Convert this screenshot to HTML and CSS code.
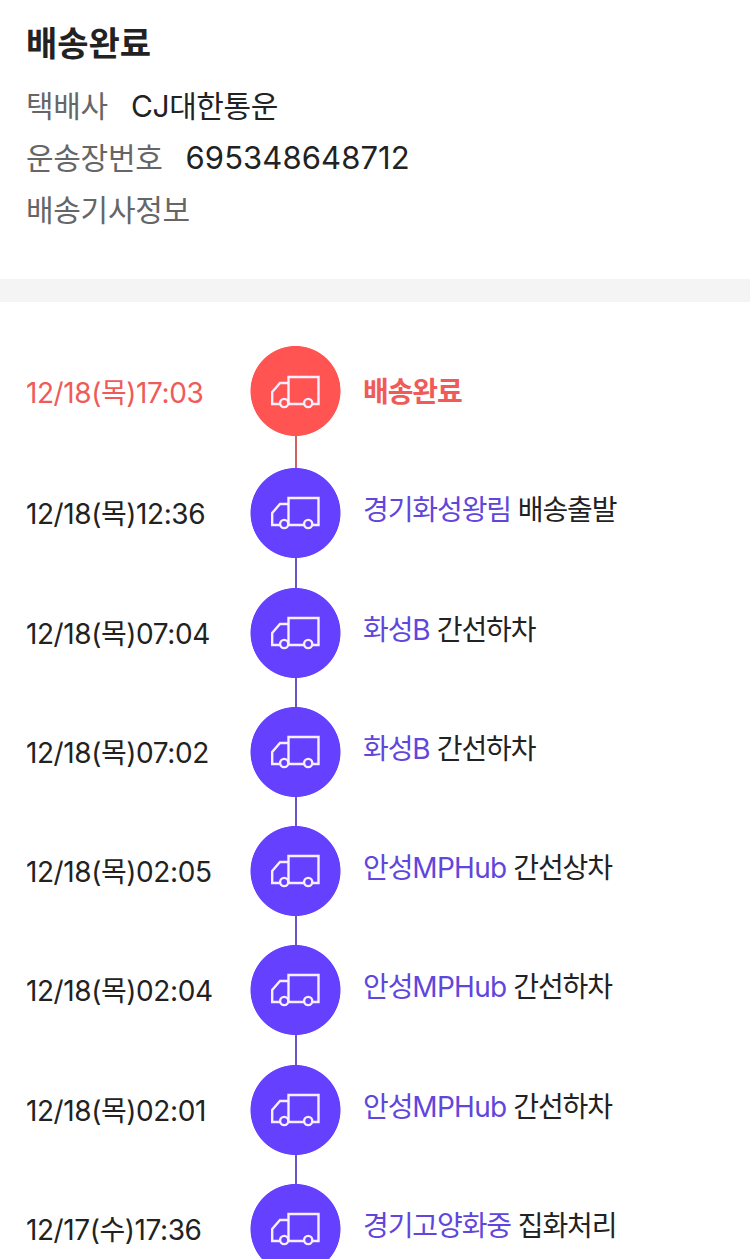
FILE: index.html
```html
<!DOCTYPE html>
<html lang="ko">
<head>
    <meta charset="UTF-8">
    <meta name="viewport" content="width=device-width, initial-scale=1.0">
    <title>배송조회</title>
    <link rel="stylesheet" href="styles.css">
</head>
<body>
    <svg class="sprite" aria-hidden="true">
        <symbol id="truck" viewBox="0 0 50 34">
            <path d="M9 29H1.2V17L9 8H17.5M17.5 29H33.5M17.5 29V2H47.5V29H41.5"/>
            <circle cx="13.2" cy="28" r="4.1"/>
            <circle cx="37.2" cy="28" r="4.1"/>
        </symbol>
    </svg>

    <section class="summary">
        <h1>배송완료</h1>
        <dl>
            <div class="info"><dt>택배사</dt><dd class="company">CJ대한통운</dd></div>
            <div class="info"><dt>운송장번호</dt><dd class="invoice">695348648712</dd></div>
            <div class="info"><dt>배송기사정보</dt></div>
        </dl>
    </section>

    <ul class="timeline">
        <li class="step done">
            <span class="time">12/18(목)17:03</span>
            <span class="marker"><svg class="icon"><use href="#truck"/></svg></span>
            <span class="status">배송완료</span>
        </li>
        <li class="step">
            <span class="time">12/18(목)12:36</span>
            <span class="marker"><svg class="icon"><use href="#truck"/></svg></span>
            <span class="status"><em>경기화성왕림</em> 배송출발</span>
        </li>
        <li class="step">
            <span class="time">12/18(목)07:04</span>
            <span class="marker"><svg class="icon"><use href="#truck"/></svg></span>
            <span class="status"><em>화성<span class="latin">B</span></em> 간선하차</span>
        </li>
        <li class="step">
            <span class="time">12/18(목)07:02</span>
            <span class="marker"><svg class="icon"><use href="#truck"/></svg></span>
            <span class="status"><em>화성<span class="latin">B</span></em> 간선하차</span>
        </li>
        <li class="step">
            <span class="time">12/18(목)02:05</span>
            <span class="marker"><svg class="icon"><use href="#truck"/></svg></span>
            <span class="status"><em>안성<span class="latin">MPHub</span></em> 간선상차</span>
        </li>
        <li class="step">
            <span class="time">12/18(목)02:04</span>
            <span class="marker"><svg class="icon"><use href="#truck"/></svg></span>
            <span class="status"><em>안성<span class="latin">MPHub</span></em> 간선하차</span>
        </li>
        <li class="step">
            <span class="time">12/18(목)02:01</span>
            <span class="marker"><svg class="icon"><use href="#truck"/></svg></span>
            <span class="status"><em>안성<span class="latin">MPHub</span></em> 간선하차</span>
        </li>
        <li class="step">
            <span class="time">12/17(수)17:36</span>
            <span class="marker"><svg class="icon"><use href="#truck"/></svg></span>
            <span class="status"><em>경기고양화중</em> 집화처리</span>
        </li>
    </ul>
</body>
</html>
```

FILE: styles.css
```css
* {
    box-sizing: border-box;
}
body {
    margin: 0;
    height: 1259px;
    overflow: hidden;
    background: #fff;
    color: #222;
    font-family: Inter, "Noto Sans CJK KR", sans-serif;
    font-size: 28px;
}
.sprite {
    display: none;
}
.summary {
    height: 302px;
    padding: 19px 26px 0;
    border-bottom: 23px solid #f4f4f4;
}
h1 {
    margin: 0 0 11px;
    font-size: 34px;
    line-height: 50px;
    font-weight: 700;
}
dl,
dd {
    margin: 0;
}
.info {
    display: flex;
    gap: 23px;
    height: 52px;
    font-size: 30px;
    line-height: 52px;
    letter-spacing: -0.3px;
}
.info dt {
    color: #666;
}
.company {
    letter-spacing: -0.4px;
}
.invoice {
    font-size: 31px;
    letter-spacing: 0.1px;
}
.timeline {
    margin: 0;
    padding: 44px 0 0 26px;
    list-style: none;
}
.step {
    display: grid;
    grid-template-columns: 224px 91px 1fr;
    height: 119.3px;
    line-height: 90px;
    white-space: nowrap;
}
.time {
    padding-top: 1px;
    letter-spacing: -0.42px;
}
/* circle plus the line down to the next step */
.marker {
    display: flex;
    justify-content: center;
    height: 100%;
    background:
        radial-gradient(circle at 45.5px 45px, #6640ff 44.6px, transparent 45.4px),
        linear-gradient(#6a54c8, #6a54c8) 45px 0 / 2px 100% no-repeat;
}
.icon {
    width: 50px;
    height: 34px;
    margin-top: 28px;
    fill: none;
    stroke: #f5efff;
    stroke-width: 2.4;
}
.status {
    padding-left: 22px;
    line-height: 85px;
    letter-spacing: -1.1px;
}
.status em {
    color: #6046dc;
    font-style: normal;
}
.latin {
    letter-spacing: -0.7px;
}
.done {
    height: 122.3px;
    color: #ef5b58;
}
.done .time {
    padding-top: 2px;
}
.done .marker {
    background:
        radial-gradient(circle at 45.5px 45px, #ff5451 44.6px, transparent 45.4px),
        linear-gradient(#cf6262, #cf6262) 45px 0 / 2px 100% no-repeat;
}
.done .icon {
    margin-top: 29px;
}
.done .status {
    line-height: 92px;
    font-weight: 700;
}
```
